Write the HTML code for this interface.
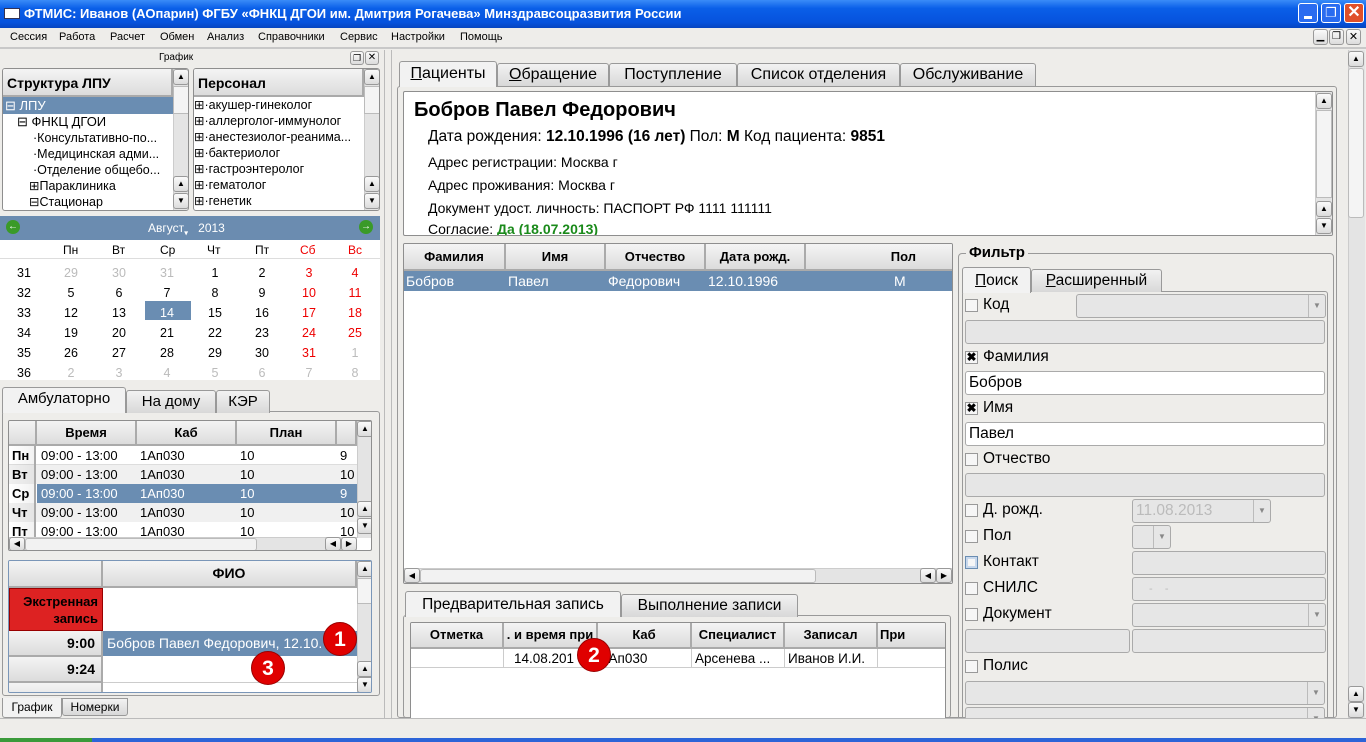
<!DOCTYPE html>
<html><head><meta charset="utf-8"><style>
*{box-sizing:border-box;margin:0;padding:0}
body{width:1366px;height:742px;overflow:hidden;background:#eeedea;font-family:"Liberation Sans",sans-serif;font-size:13px;color:#000;position:relative}
.a{position:absolute}
.t{position:absolute;white-space:nowrap}
.box{position:absolute;background:#fff;border:1px solid #8e8e8e;border-radius:3px}
.hd{position:absolute;background:linear-gradient(#f4f4f4,#dcdcdc);border-right:2px solid #aaa;border-bottom:2px solid #aaa;font-weight:bold;text-align:center;font-size:13px}
.sel{background:#6a8db2;color:#fff}
.sb{position:absolute;background:#e4e4e4;border-left:1px solid #ccc}
.btn{position:absolute;width:16px;height:16px;background:linear-gradient(#fafafa,#dcdcdc);border:1px solid #999;border-radius:3px;font-size:8px;text-align:center;line-height:14px}
.tab{position:absolute;background:linear-gradient(#f2f2f2,#d8d8d8);border:1px solid #999;border-bottom:none;border-radius:3px 3px 0 0;text-align:center;font-size:15px;line-height:22px}
.tab.on{background:#f2f2f2;height:26px}
.cb{position:absolute;width:13px;height:13px;border:1px solid #999;background:#f6f6f6}
.fld{position:absolute;border:1px solid #aaa;border-radius:3px;background:#e6e6e6;height:24px}
.fld.w{background:#fff}
.dd{position:absolute;right:0;top:0;width:17px;height:100%;border-left:1px solid #bbb;font-size:8px;color:#888;text-align:center;line-height:22px}
.badge{position:absolute;width:34px;height:34px;border-radius:50%;background:#e00000;color:#fff;font-weight:bold;font-size:21px;text-align:center;line-height:34px;border:1px solid #900}
.row{position:absolute;height:19px;line-height:19px;font-size:13px}
</style></head><body>
<div class="a" style="left:0;top:0;width:1366px;height:28px;background:linear-gradient(#3a8cf8,#0a5fe8 30%,#0652dd 80%,#0645c0)"></div>
<div class="a" style="left:4px;top:8px;width:16px;height:11px;background:#fff;border:1px solid #335"></div>
<div class="t" style="left:24px;top:6px;color:#fff;font-weight:bold;font-size:13px">ФТМИС: Иванов (АОпарин) ФГБУ «ФНКЦ ДГОИ им. Дмитрия Рогачева» Минздравсоцразвития России</div>
<div class="a" style="left:1298px;top:3px;width:20px;height:20px;background:#2a6cf0;border:1px solid #fff;border-radius:3px"><div class="a" style="left:5px;top:12px;width:8px;height:3px;background:#fff"></div></div>
<div class="a" style="left:1321px;top:3px;width:20px;height:20px;background:#2a6cf0;border:1px solid #fff;border-radius:3px;color:#fff;font-size:13px;text-align:center;line-height:18px">❐</div>
<div class="a" style="left:1344px;top:3px;width:20px;height:20px;background:#e0502a;border:1px solid #fff;border-radius:3px;color:#fff;font-size:16px;font-weight:bold;text-align:center;line-height:18px">✕</div>
<div class="t" style="left:10px;top:31px;font-size:11px">Сессия</div>
<div class="t" style="left:59px;top:31px;font-size:11px">Работа</div>
<div class="t" style="left:110px;top:31px;font-size:11px">Расчет</div>
<div class="t" style="left:160px;top:31px;font-size:11px">Обмен</div>
<div class="t" style="left:207px;top:31px;font-size:11px">Анализ</div>
<div class="t" style="left:258px;top:31px;font-size:11px">Справочники</div>
<div class="t" style="left:340px;top:31px;font-size:11px">Сервис</div>
<div class="t" style="left:391px;top:31px;font-size:11px">Настройки</div>
<div class="t" style="left:460px;top:31px;font-size:11px">Помощь</div>
<div class="btn" style="left:1313px;top:29px;width:15px;font-size:10px">▁</div>
<div class="btn" style="left:1329px;top:29px;width:15px;font-size:10px">❐</div>
<div class="btn" style="left:1346px;top:29px;width:15px;font-size:11px">✕</div>
<div class="a" style="left:0;top:47px;width:1366px;height:2px;background:#c8c8c8"></div>
<div class="t" style="left:159px;top:52px;font-size:10px">График</div>
<div class="btn" style="left:350px;top:51px;width:14px;height:14px;line-height:12px;font-size:9px">❐</div>
<div class="btn" style="left:365px;top:51px;width:14px;height:14px;line-height:12px;font-size:10px">✕</div>
<div class="a" style="left:384px;top:50px;width:8px;height:668px;border-left:1px solid #bbb;border-right:1px solid #bbb"></div>
<div class="box" style="left:2px;top:68px;width:187px;height:143px;overflow:hidden">
 <div class="hd" style="left:0;top:0;width:170px;height:28px;text-align:left;padding-left:4px;line-height:28px;font-size:14px">Структура ЛПУ</div>
 <div class="row sel" style="left:0;top:28px;width:170px;height:17px;line-height:17px;padding-left:2px">⊟ ЛПУ</div>
 <div class="row" style="left:14px;top:45px;height:17px;line-height:16px">⊟ ФНКЦ ДГОИ</div>
 <div class="row" style="left:30px;top:61px;height:16px;line-height:16px;font-size:12.5px">·Консультативно-по...</div>
 <div class="row" style="left:30px;top:77px;height:16px;line-height:16px;font-size:12.5px">·Медицинская адми...</div>
 <div class="row" style="left:30px;top:93px;height:16px;line-height:16px;font-size:12.5px">·Отделение общебо...</div>
 <div class="row" style="left:26px;top:109px;height:16px;line-height:16px;font-size:12.5px">⊞Параклиника</div>
 <div class="row" style="left:26px;top:125px;height:16px;line-height:16px;font-size:12.5px">⊟Стационар</div>
 <div class="sb" style="left:170px;top:0;width:16px;height:143px"></div>
 <div class="btn" style="left:170px;top:0">▲</div><div class="a" style="left:170px;top:17px;width:16px;height:28px;background:#f4f4f4;border:1px solid #bbb"></div>
 <div class="btn" style="left:170px;top:107px">▲</div><div class="btn" style="left:170px;top:124px">▼</div>
</div>
<div class="box" style="left:193px;top:68px;width:187px;height:143px;overflow:hidden">
 <div class="hd" style="left:0;top:0;width:170px;height:28px;text-align:left;padding-left:4px;line-height:28px;font-size:14px">Персонал</div>
 <div class="row" style="left:0;top:28px;height:16px;line-height:16px;font-size:12.5px">⊞·акушер-гинеколог</div>
 <div class="row" style="left:0;top:44px;height:16px;line-height:16px;font-size:12.5px">⊞·аллерголог-иммунолог</div>
 <div class="row" style="left:0;top:60px;height:16px;line-height:16px;font-size:12.5px">⊞·анестезиолог-реанима...</div>
 <div class="row" style="left:0;top:76px;height:16px;line-height:16px;font-size:12.5px">⊞·бактериолог</div>
 <div class="row" style="left:0;top:92px;height:16px;line-height:16px;font-size:12.5px">⊞·гастроэнтеролог</div>
 <div class="row" style="left:0;top:108px;height:16px;line-height:16px;font-size:12.5px">⊞·гематолог</div>
 <div class="row" style="left:0;top:124px;height:16px;line-height:16px;font-size:12.5px">⊞·генетик</div>
 <div class="sb" style="left:170px;top:0;width:16px;height:143px"></div>
 <div class="btn" style="left:170px;top:0">▲</div><div class="a" style="left:170px;top:17px;width:16px;height:28px;background:#f4f4f4;border:1px solid #bbb"></div>
 <div class="btn" style="left:170px;top:107px">▲</div><div class="btn" style="left:170px;top:124px">▼</div>
</div>
<div class="a" style="left:0;top:216px;width:380px;height:24px;background:#6b8cb0"></div>
<div class="a" style="left:6px;top:220px;width:14px;height:14px;border-radius:50%;background:#3a9a28;color:#fff;font-size:10px;text-align:center;line-height:14px;font-weight:bold">←</div>
<div class="a" style="left:359px;top:220px;width:14px;height:14px;border-radius:50%;background:#3a9a28;color:#fff;font-size:10px;text-align:center;line-height:14px;font-weight:bold">→</div>
<div class="t" style="left:148px;top:221px;color:#fff;font-size:12px">Август<sub style="font-size:8px">▾</sub>&nbsp;&nbsp; 2013</div>
<div class="a" style="left:0;top:240px;width:380px;height:140px;background:#fff"></div>
<div class="a" style="left:0;top:258px;width:380px;height:1px;background:#ddd"></div>
<div class="a" style="left:145px;top:301px;width:46px;height:19px;background:#6a8db2"></div>
<div class="a" style="left:0;top:243px;width:380px;font-size:12px">
<div class="t" style="left:63px">Пн</div><div class="t" style="left:112px">Вт</div><div class="t" style="left:160px">Ср</div><div class="t" style="left:207px">Чт</div><div class="t" style="left:255px">Пт</div><div class="t" style="left:300px;color:#e00">Сб</div><div class="t" style="left:348px;color:#e00">Вс</div>
</div>
<div class="a" style="left:0;top:263px;width:380px;font-size:12.5px;line-height:20px">
<div class="t" style="left:17px;top:0">31<br>32<br>33<br>34<br>35<br>36</div>
<div class="t" style="left:64px;top:0;text-align:center;width:14px"><span style="color:#bbb">29</span><br>5<br>12<br>19<br>26<br><span style="color:#bbb">2</span></div>
<div class="t" style="left:112px;top:0;text-align:center;width:14px"><span style="color:#bbb">30</span><br>6<br>13<br>20<br>27<br><span style="color:#bbb">3</span></div>
<div class="t" style="left:160px;top:0;text-align:center;width:14px"><span style="color:#bbb">31</span><br>7<br><span style="color:#fff">14</span><br>21<br>28<br><span style="color:#bbb">4</span></div>
<div class="t" style="left:208px;top:0;text-align:center;width:14px">1<br>8<br>15<br>22<br>29<br><span style="color:#bbb">5</span></div>
<div class="t" style="left:255px;top:0;text-align:center;width:14px">2<br>9<br>16<br>23<br>30<br><span style="color:#bbb">6</span></div>
<div class="t" style="left:302px;top:0;text-align:center;width:14px;color:#e00">3<br>10<br>17<br>24<br>31<br><span style="color:#bbb">7</span></div>
<div class="t" style="left:348px;top:0;text-align:center;width:14px;color:#e00">4<br>11<br>18<br>25<br><span style="color:#bbb">1</span><br><span style="color:#bbb">8</span></div>
</div>
<div class="a" style="left:2px;top:411px;width:378px;height:285px;border:1px solid #999;border-radius:3px"></div>
<div class="tab on" style="left:2px;top:387px;width:124px">Амбулаторно</div>
<div class="tab" style="left:126px;top:390px;width:90px">На дому</div>
<div class="tab" style="left:216px;top:390px;width:54px">КЭР</div>
<div class="box" style="left:8px;top:420px;width:364px;height:131px;overflow:hidden;border-radius:2px">
 <div class="hd" style="left:0;top:0;width:28px;height:25px"></div>
 <div class="hd" style="left:28px;top:0;width:100px;height:25px;line-height:23px">Время</div>
 <div class="hd" style="left:128px;top:0;width:100px;height:25px;line-height:23px">Каб</div>
 <div class="hd" style="left:228px;top:0;width:100px;height:25px;line-height:23px">План</div>
 <div class="hd" style="left:328px;top:0;width:20px;height:25px"></div>
 <div class="a" style="left:0;top:25px;width:348px;font-size:13px;line-height:19px">
  <div class="a" style="left:0;top:0;width:348px;height:19px;border-bottom:1px solid #ddd"><b class="t" style="left:3px">Пн</b><span class="t" style="left:32px">09:00 - 13:00</span><span class="t" style="left:131px">1Ап030</span><span class="t" style="left:231px">10</span><span class="t" style="left:331px">9</span></div>
  <div class="a" style="left:0;top:19px;width:348px;height:19px;background:#f0f0f0"><b class="t" style="left:3px">Вт</b><span class="t" style="left:32px">09:00 - 13:00</span><span class="t" style="left:131px">1Ап030</span><span class="t" style="left:231px">10</span><span class="t" style="left:331px">10</span></div>
  <div class="a sel" style="left:28px;top:38px;width:320px;height:19px"><span class="t" style="left:4px">09:00 - 13:00</span><span class="t" style="left:103px">1Ап030</span><span class="t" style="left:203px">10</span><span class="t" style="left:303px">9</span></div>
  <b class="t" style="left:3px;top:38px">Ср</b>
  <div class="a" style="left:0;top:57px;width:348px;height:19px;background:#f0f0f0"><b class="t" style="left:3px">Чт</b><span class="t" style="left:32px">09:00 - 13:00</span><span class="t" style="left:131px">1Ап030</span><span class="t" style="left:231px">10</span><span class="t" style="left:331px">10</span></div>
  <div class="a" style="left:0;top:76px;width:348px;height:15px;overflow:hidden"><b class="t" style="left:3px">Пт</b><span class="t" style="left:32px">09:00 - 13:00</span><span class="t" style="left:131px">1Ап030</span><span class="t" style="left:231px">10</span><span class="t" style="left:331px">10</span></div>
  <div class="a" style="left:0;top:0;width:27px;height:91px;border-right:2px solid #aaa;background:linear-gradient(90deg,transparent,rgba(0,0,0,.05))"></div>
 </div>
 <div class="sb" style="left:348px;top:0;width:16px;height:117px"></div>
 <div class="btn" style="left:348px;top:0">▲</div><div class="btn" style="left:348px;top:80px">▲</div><div class="btn" style="left:348px;top:97px">▼</div>
 <div class="a" style="left:0;top:116px;width:348px;height:15px;background:#e4e4e4;border-top:1px solid #ccc"></div>
 <div class="btn" style="left:0;top:116px;height:14px;line-height:12px">◀</div>
 <div class="a" style="left:16px;top:117px;width:232px;height:13px;background:#f2f2f2;border:1px solid #bbb;border-radius:3px"></div>
 <div class="btn" style="left:316px;top:116px;height:14px;line-height:12px">◀</div><div class="btn" style="left:332px;top:116px;height:14px;line-height:12px">▶</div>
</div>
<div class="box" style="left:8px;top:560px;width:364px;height:133px;overflow:hidden;border-color:#7a96b8;border-radius:2px">
 <div class="hd" style="left:0;top:0;width:94px;height:27px"></div>
 <div class="hd" style="left:94px;top:0;width:254px;height:27px;line-height:25px;font-size:14px">ФИО</div>
 <div class="a" style="left:0;top:27px;width:94px;height:43px;background:#dd2222;border:1px solid #900;color:#000;font-weight:bold;text-align:right;padding-right:4px;line-height:17px;padding-top:4px;font-size:13px">Экстренная<br>запись</div>
 <div class="hd" style="left:0;top:70px;width:94px;height:26px;text-align:right;padding-right:6px;line-height:25px;font-size:14px">9:00</div>
 <div class="a sel" style="left:94px;top:70px;width:254px;height:25px;line-height:25px;padding-left:4px;font-size:14px">Бобров Павел Федорович, 12.10.</div>
 <div class="hd" style="left:0;top:96px;width:94px;height:26px;text-align:right;padding-right:6px;line-height:25px;font-size:14px">9:24</div>
 <div class="hd" style="left:0;top:122px;width:94px;height:26px"></div>
 <div class="a" style="left:94px;top:121px;width:254px;height:1px;background:#ccc"></div>
 <div class="sb" style="left:348px;top:0;width:16px;height:133px"></div>
 <div class="btn" style="left:348px;top:0">▲</div><div class="a" style="left:348px;top:17px;width:16px;height:26px;background:#f4f4f4;border:1px solid #bbb"></div>
 <div class="btn" style="left:348px;top:100px">▲</div><div class="btn" style="left:348px;top:116px">▼</div>
</div>
<div class="tab on" style="left:2px;top:698px;width:60px;height:20px;font-size:12px;line-height:18px;border-radius:0 0 3px 3px;border-top:none;border-bottom:1px solid #999">График</div>
<div class="tab" style="left:62px;top:698px;width:66px;height:18px;font-size:12px;line-height:16px;border-radius:0 0 3px 3px;border-bottom:1px solid #999">Номерки</div>
<div class="a" style="left:397px;top:86px;width:940px;height:632px;border:1px solid #999;border-radius:3px"></div>
<div class="tab on" style="left:399px;top:61px;width:98px;font-size:16px;line-height:24px"><u>П</u>ациенты</div>
<div class="tab" style="left:497px;top:63px;width:112px;font-size:16px"><u>О</u>бращение</div>
<div class="tab" style="left:609px;top:63px;width:128px;font-size:16px">Поступление</div>
<div class="tab" style="left:737px;top:63px;width:163px;font-size:16px">Список отделения</div>
<div class="tab" style="left:900px;top:63px;width:136px;font-size:16px">Обслуживание</div>
<div class="box" style="left:403px;top:91px;width:930px;height:145px;border-radius:2px;overflow:hidden">
 <div class="t" style="left:10px;top:7px;font-size:20px;font-weight:bold">Бобров Павел Федорович</div>
 <div class="t" style="left:24px;top:36px;font-size:15.5px">Дата рождения: <b>12.10.1996 (16 лет)</b> Пол: <b>М</b> Код пациента: <b>9851</b></div>
 <div class="t" style="left:24px;top:62px;font-size:14px">Адрес регистрации: Москва г</div>
 <div class="t" style="left:24px;top:85px;font-size:14px">Адрес проживания: Москва г</div>
 <div class="t" style="left:24px;top:108px;font-size:14px">Документ удост. личность: ПАСПОРТ РФ 1111 111111</div>
 <div class="t" style="left:24px;top:129px;font-size:14px">Согласие: <b style="color:#1a8a1a">Да (18.07.2013)</b></div>
 <div class="sb" style="left:911px;top:0;width:18px;height:145px"></div>
 <div class="btn" style="left:912px;top:1px">▲</div><div class="a" style="left:912px;top:18px;width:16px;height:88px;background:#f4f4f4;border:1px solid #bbb"></div>
 <div class="btn" style="left:912px;top:109px">▲</div><div class="btn" style="left:912px;top:126px">▼</div>
</div>
<div class="box" style="left:403px;top:243px;width:550px;height:341px;border-radius:2px;overflow:hidden">
 <div class="hd" style="left:0;top:0;width:102px;height:27px;line-height:25px">Фамилия</div>
 <div class="hd" style="left:102px;top:0;width:100px;height:27px;line-height:25px">Имя</div>
 <div class="hd" style="left:202px;top:0;width:100px;height:27px;line-height:25px">Отчество</div>
 <div class="hd" style="left:302px;top:0;width:100px;height:27px;line-height:25px">Дата рожд.</div>
 <div class="hd" style="left:402px;top:0;width:148px;height:27px;line-height:25px;text-align:right;padding-right:36px">Пол</div>
 <div class="a sel" style="left:0;top:27px;width:548px;height:20px;line-height:20px;font-size:14px"><span class="t" style="left:2px">Бобров</span><span class="t" style="left:104px">Павел</span><span class="t" style="left:204px">Федорович</span><span class="t" style="left:304px">12.10.1996</span><span class="t" style="left:490px">М</span></div>
 <div class="a" style="left:0;top:324px;width:548px;height:16px;background:#e4e4e4;border-top:1px solid #ccc"></div>
 <div class="btn" style="left:0;top:324px;height:15px">◀</div>
 <div class="a" style="left:16px;top:325px;width:396px;height:14px;background:#f2f2f2;border:1px solid #bbb;border-radius:3px"></div>
 <div class="btn" style="left:516px;top:324px;height:15px">◀</div><div class="btn" style="left:532px;top:324px;height:15px">▶</div>
</div>
<div class="a" style="left:403px;top:615px;width:548px;height:103px;border:1px solid #999;border-radius:3px"></div>
<div class="tab on" style="left:405px;top:591px;width:216px;font-size:15.5px;line-height:26px">Предварительная запись</div>
<div class="tab" style="left:621px;top:594px;width:177px;font-size:15.5px">Выполнение записи</div>
<div class="box" style="left:410px;top:622px;width:536px;height:100px;border-radius:2px;overflow:hidden">
 <div class="hd" style="left:0;top:0;width:93px;height:26px;line-height:24px">Отметка</div>
 <div class="hd" style="left:93px;top:0;width:94px;height:26px;line-height:24px;overflow:hidden">. и время при</div>
 <div class="hd" style="left:187px;top:0;width:94px;height:26px;line-height:24px">Каб</div>
 <div class="hd" style="left:281px;top:0;width:93px;height:26px;line-height:24px">Специалист</div>
 <div class="hd" style="left:374px;top:0;width:93px;height:26px;line-height:24px">Записал</div>
 <div class="hd" style="left:467px;top:0;width:69px;height:26px;line-height:24px;text-align:left;padding-left:2px">При</div>
 <div class="a" style="left:0;top:26px;width:536px;height:19px;border-bottom:1px solid #ccc;line-height:19px;font-size:13.5px"><span class="t" style="left:103px">14.08.201</span><span class="t" style="left:190px">1Ап030</span><span class="t" style="left:284px">Арсенева ...</span><span class="t" style="left:377px">Иванов И.И.</span>
 <div class="a" style="left:92px;top:0;width:1px;height:19px;background:#ccc"></div><div class="a" style="left:186px;top:0;width:1px;height:19px;background:#ccc"></div><div class="a" style="left:280px;top:0;width:1px;height:19px;background:#ccc"></div><div class="a" style="left:373px;top:0;width:1px;height:19px;background:#ccc"></div><div class="a" style="left:466px;top:0;width:1px;height:19px;background:#ccc"></div></div>
</div>
<div class="a" style="left:958px;top:253px;width:376px;height:470px;border:1px solid #999;border-radius:4px"></div>
<div class="t" style="left:966px;top:244px;font-size:15px;font-weight:bold;background:#eeedea;padding:0 3px">Фильтр</div>
<div class="a" style="left:962px;top:291px;width:366px;height:430px;border:1px solid #999;border-radius:3px"></div>
<div class="tab on" style="left:962px;top:267px;width:69px;font-size:15.5px;line-height:26px"><u>П</u>оиск</div>
<div class="tab" style="left:1031px;top:269px;width:131px;font-size:15.5px"><u>Р</u>асширенный</div>
<div class="a" style="left:963px;top:292px;font-size:15.5px">
 <div class="cb" style="left:2px;top:7px"></div><div class="t" style="left:20px;top:4px">Код</div>
 <div class="fld" style="left:113px;top:2px;width:250px"><div class="dd">▼</div></div>
 <div class="fld" style="left:2px;top:28px;width:360px"></div>
 <div class="cb" style="left:2px;top:59px;font-size:12px;line-height:11px;text-align:center;font-weight:bold">✖</div><div class="t" style="left:20px;top:56px">Фамилия</div>
 <div class="fld w" style="left:2px;top:79px;width:360px;padding-left:3px;line-height:22px">Бобров</div>
 <div class="cb" style="left:2px;top:110px;font-size:12px;line-height:11px;text-align:center;font-weight:bold">✖</div><div class="t" style="left:20px;top:107px">Имя</div>
 <div class="fld w" style="left:2px;top:130px;width:360px;padding-left:3px;line-height:22px">Павел</div>
 <div class="cb" style="left:2px;top:161px"></div><div class="t" style="left:20px;top:158px">Отчество</div>
 <div class="fld" style="left:2px;top:181px;width:360px"></div>
 <div class="cb" style="left:2px;top:212px"></div><div class="t" style="left:20px;top:209px">Д. рожд.</div>
 <div class="fld" style="left:169px;top:207px;width:139px;color:#bbb;padding-left:3px;line-height:22px">11.08.2013<div class="dd">▼</div></div>
 <div class="cb" style="left:2px;top:238px"></div><div class="t" style="left:20px;top:235px">Пол</div>
 <div class="fld" style="left:169px;top:233px;width:39px"><div class="dd">▼</div></div>
 <div class="cb" style="left:2px;top:264px;border-color:#6a8db2;box-shadow:inset 0 0 0 2px #c8d8ec"></div><div class="t" style="left:20px;top:261px">Контакт</div>
 <div class="fld" style="left:169px;top:259px;width:194px"></div>
 <div class="cb" style="left:2px;top:290px"></div><div class="t" style="left:20px;top:287px">СНИЛС</div>
 <div class="fld" style="left:169px;top:285px;width:194px;color:#bbb;font-size:11px;line-height:22px;padding-left:16px">-&nbsp;&nbsp;&nbsp; -</div>
 <div class="cb" style="left:2px;top:316px"></div><div class="t" style="left:20px;top:313px">Документ</div>
 <div class="fld" style="left:169px;top:311px;width:194px"><div class="dd">▼</div></div>
 <div class="fld" style="left:2px;top:337px;width:165px"></div>
 <div class="fld" style="left:169px;top:337px;width:194px"></div>
 <div class="cb" style="left:2px;top:368px"></div><div class="t" style="left:20px;top:365px">Полис</div>
 <div class="fld" style="left:2px;top:389px;width:360px"><div class="dd">▼</div></div>
 <div class="fld" style="left:2px;top:415px;width:360px"><div class="dd">▼</div></div>
</div>
<div class="sb" style="left:1348px;top:50px;width:17px;height:668px"></div>
<div class="btn" style="left:1348px;top:51px">▲</div>
<div class="a" style="left:1348px;top:68px;width:16px;height:150px;background:#f4f4f4;border:1px solid #bbb;border-radius:3px"></div>
<div class="btn" style="left:1348px;top:686px">▲</div><div class="btn" style="left:1348px;top:702px">▼</div>
<div class="a" style="left:0;top:718px;width:1366px;height:20px;background:#eeedea;border-top:1px solid #bbb"></div>
<div class="a" style="left:0;top:738px;width:1366px;height:4px;background:#2c64d8"></div>
<div class="a" style="left:0;top:738px;width:92px;height:4px;background:#3a9a3a"></div>
<div class="badge" style="left:323px;top:622px">1</div>
<div class="badge" style="left:577px;top:638px">2</div>
<div class="badge" style="left:251px;top:651px">3</div>
</body></html>
